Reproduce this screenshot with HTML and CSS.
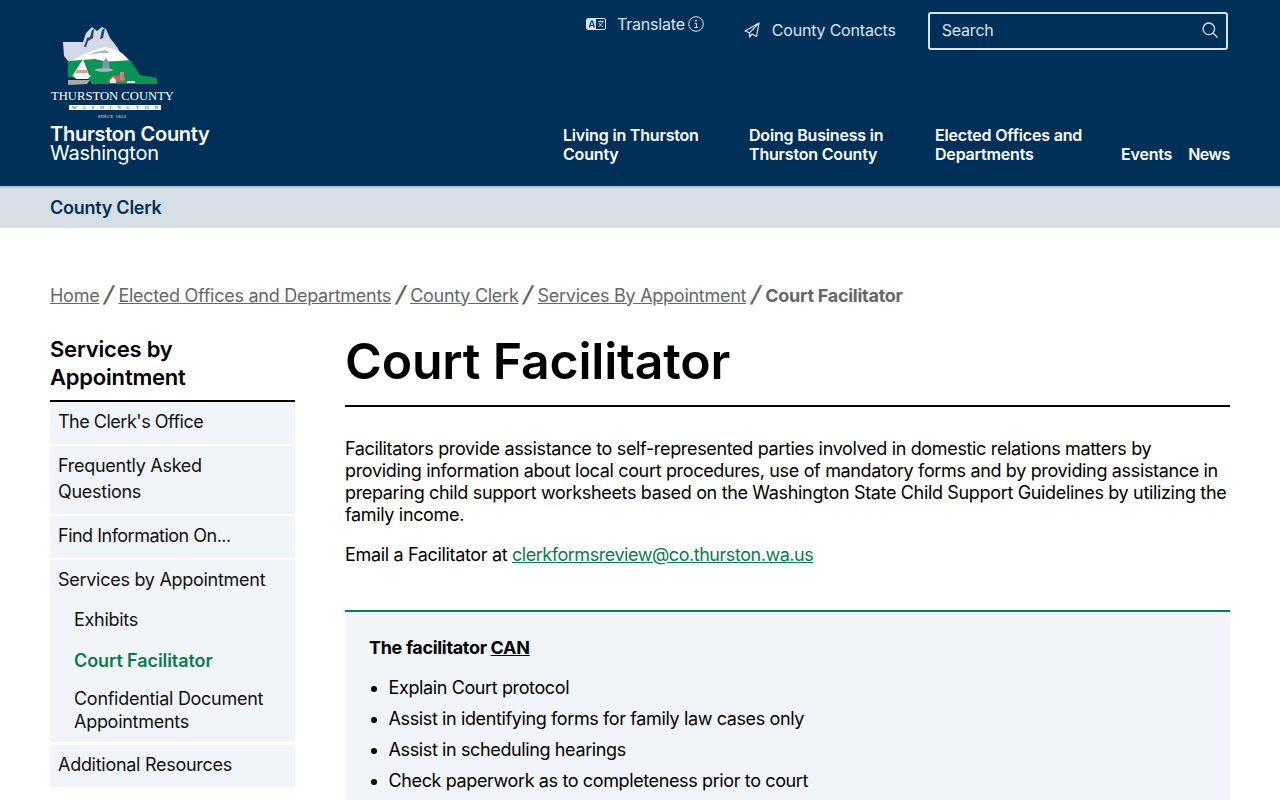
FILE: index.html
```html
<!DOCTYPE html>
<html lang="en">
<head>
<meta charset="utf-8">
<title>Court Facilitator</title>
<link rel="stylesheet" href="styles.css">
</head>
<body>
<header class="site-header">
  <div class="brand">
    <svg class="seal" viewBox="0 0 124 93" width="124" height="93" aria-hidden="true">
      <path d="M13 16L33 16 36 7 42 1 47 5 52 1 56 3 60 12 67 21 73 31 78 35H18L14 30z" fill="#d5d8ea"/>
      <path d="M30 30L42 25 55 21 63 23 72 27 80 35 18 37z" fill="#fff"/>
      <path d="M38 29L46 26 55 24 60 27 50 27z" fill="#aab3c6"/>
      <path d="M18 35L45 33 58 36 80 34 90 49 107 52 107 58 42 58 38 52 18 51z" fill="#0a9454"/>
      <path d="M18 54H40L37 58 18 59z" fill="#a6aaad"/>
      <path d="M33 33L39 49H23z" fill="#fff"/>
      <path d="M27 44H37L38 47H25z" fill="#dc9b8e"/>
      <path d="M22 49H41L38 53H26z" fill="#f4f4f4"/>
      <path d="M52 44L53 36 56 32 59 36 60 44z" fill="#7f93a8"/>
      <ellipse cx="54" cy="44" rx="9" ry="1.800" fill="#a9b6c6"/>
      <path d="M57 56L62 50 70 49 75 51 75 56z" fill="#b4675c"/>
      <path d="M70 46H74V54H70z" fill="#c7837a"/>
      <path d="M60 54L63 51 66 54V57H60z" fill="#f1e5e0"/>
      <path d="M77 55H85V57H77z" fill="#e6e6e6"/>
      <path d="M34 21L37 12 40 11 42 4 44 3 43 12 38 15 36 21z" fill="#24426c"/>
      <path d="M50 13L52 4 55 2 53 12z" fill="#24426c"/>
      <text class="seal-name" x="62.500" y="74" text-anchor="middle" textLength="123" lengthAdjust="spacingAndGlyphs">THURSTON COUNTY</text>
      <rect x="19" y="79" width="92" height="5" fill="#fff"/>
      <text class="seal-wa" x="65" y="83.300" text-anchor="middle" textLength="86">WASHINGTON</text>
      <text class="seal-since" x="62" y="92" text-anchor="middle" textLength="28">SINCE 1852</text>
    </svg>
    <div class="brand-name"><strong>Thurston County</strong><span>Washington</span></div>
  </div>
  <div class="header-right">
    <div class="utility">
      <div class="translate">
        <svg class="ico-lang" viewBox="0 0 20 12" width="20" height="12" aria-hidden="true">
          <rect x=".5" y=".5" width="19" height="11" rx="1.500" fill="none" stroke="#d6e4f0"/>
          <path d="M1 2a1 1 0 0 1 1-1h8v10H2a1 1 0 0 1-1-1z" fill="#d6e4f0"/>
          <path d="M3.400 9.500l2-6.500h1l2 6.500M4.200 7.500h3.400" fill="none" stroke="#003057" stroke-width="1.200"/>
          <path d="M12 3.500h5.500M14.700 2.500v1M16.500 3.500c-.5 2.300-2 4-4 5M13 5c.7 1.500 2.300 3 4 3.500" fill="none" stroke="#d6e4f0" stroke-width=".9"/>
        </svg>
        <span class="translate-label">Translate</span>
        <svg class="ico-info" viewBox="0 0 16 16" width="16" height="16" aria-hidden="true">
          <circle cx="8" cy="8" r="7.300" fill="none" stroke="#d6e4f0" stroke-width="1"/>
          <circle cx="8" cy="4.700" r=".9" fill="#d6e4f0"/>
          <path d="M6.500 7.200H8.400V11.500M6.300 11.500H10" fill="none" stroke="#d6e4f0" stroke-width="1"/>
        </svg>
      </div>
      <a class="contacts" href="#">
        <svg viewBox="0 0 16 16" width="16" height="16" aria-hidden="true">
          <path d="M15 1L1 9 5.500 10.800 15 1 12.500 14.500 8 12 5.500 15V10.800" fill="none" stroke="#d6e4f0" stroke-width="1.200" stroke-linejoin="round"/>
        </svg>
        <span>County Contacts</span>
      </a>
      <div class="search">
        <span>Search</span>
        <svg viewBox="0 0 16 16" width="16" height="16" aria-hidden="true">
          <circle cx="6.800" cy="6.800" r="5.800" fill="none" stroke="#d6e4f0" stroke-width="1.300"/>
          <path d="M11 11l4.500 4.500" stroke="#d6e4f0" stroke-width="1.300"/>
        </svg>
      </div>
    </div>
    <nav class="main-nav">
      <a class="nav-wide" href="#">Living in Thurston County</a>
      <a class="nav-wide" href="#">Doing Business in Thurston County</a>
      <a class="nav-wide" href="#">Elected Offices and Departments</a>
      <a class="nav-short" href="#">Events</a>
      <a class="nav-short" href="#">News</a>
    </nav>
  </div>
</header>
<div class="subbar"><a href="#">County Clerk</a></div>
<main class="page">
  <nav class="crumbs">
    <a href="#">Home</a><i>/</i><a href="#">Elected Offices and Departments</a><i>/</i><a href="#">County Clerk</a><i>/</i><a href="#">Services By Appointment</a><i>/</i><b>Court Facilitator</b>
  </nav>
  <div class="columns">
    <aside class="side">
      <h2>Services by Appointment</h2>
      <ul class="side-list">
        <li class="tight"><a href="#">The Clerk's Office</a></li>
        <li><a href="#">Frequently Asked Questions</a></li>
        <li class="tight"><a href="#">Find Information On...</a></li>
        <li class="has-sub"><a href="#">Services by Appointment</a>
          <ul class="sub-list">
            <li><a href="#">Exhibits</a></li>
            <li class="current"><a href="#">Court Facilitator</a></li>
            <li><a href="#">Confidential Document Appointments</a></li>
          </ul>
        </li>
        <li><a href="#">Additional Resources</a></li>
      </ul>
    </aside>
    <article class="content">
      <h1>Court Facilitator</h1>
      <p class="intro">Facilitators provide assistance to self-represented parties involved in domestic relations matters by providing information about local court procedures, use of mandatory forms and by providing assistance in preparing child support worksheets based on the Washington State Child Support Guidelines by utilizing the family income.</p>
      <p class="email">Email a Facilitator at <a href="#">clerkformsreview@co.thurston.wa.us</a></p>
      <section class="panel">
        <p class="panel-title"><b>The facilitator <u>CAN</u></b></p>
        <ul>
          <li>Explain Court protocol</li>
          <li>Assist in identifying forms for family law cases only</li>
          <li>Assist in scheduling hearings</li>
          <li>Check paperwork as to completeness prior to court</li>
        </ul>
      </section>
    </article>
  </div>
</main>
</body>
</html>
```
FILE: styles.css
```css
* { box-sizing: border-box; }
html, body { height: 800px; overflow: hidden; }
body { margin: 0; font-family: Inter, "Liberation Sans", sans-serif; color: #000; background: #fff; font-size: 18px; letter-spacing: -0.34px; }
a { color: inherit; }
.site-header { height: 188px; background: #003057; border-bottom: 2px solid #b9c4cd; padding: 0 50px; display: flex; justify-content: space-between; }
.brand { padding-top: 26px; width: 300px; }
.seal { display: block; }
.seal-name { font: 11.500px "Liberation Serif", serif; fill: #fff; letter-spacing: 0; }
.seal-wa { font: 5px "Liberation Serif", serif; fill: #003057; letter-spacing: 0; }
.seal-since { font: 4.500px "Liberation Serif", serif; fill: #fff; letter-spacing: 0; }
.brand-name { margin-top: 6px; color: #fff; font-size: 20px; line-height: 19px; letter-spacing: -0.27px; display: flex; flex-direction: column; }
.brand-name strong { font-weight: 600; }
.header-right { width: 667px; display: flex; flex-direction: column; justify-content: space-between; }
.utility { display: flex; align-items: flex-start; padding-top: 12px; color: #d6e4f0; font-size: 16px; letter-spacing: -0.2px; }
.translate { display: flex; align-items: center; gap: 11px; margin-left: 23px; height: 24px; }
.translate-label { margin-right: -8px; }
.contacts { display: flex; align-items: center; gap: 12px; margin-left: 40px; height: 36px; text-decoration: none; }
.search { margin-left: 32px; width: 300px; height: 38px; border: 2px solid #d6e4f0; border-radius: 3px; display: flex; align-items: center; justify-content: space-between; padding: 0 8px 2px 12px; }
.main-nav { display: flex; align-items: flex-end; padding-bottom: 22px; color: #fff; font-size: 16px; font-weight: 600; line-height: 19px; letter-spacing: -0.2px; }
.main-nav a { text-decoration: none; white-space: nowrap; flex: none; }
.main-nav a.nav-wide { width: 186px; white-space: normal; padding-right: 16px; letter-spacing: -0.18px; }
.main-nav a.nav-short { margin-right: 16px; }
.main-nav a.nav-short:last-child { margin-right: 0; letter-spacing: -0.5px; }
.subbar { height: 40px; background: #d6dfe6; padding: 0 50px 2px; display: flex; align-items: center; color: #003057; font-weight: 600; letter-spacing: -0.25px; }
.subbar a { text-decoration: none; }
.page { padding: 56px 50px 0; }
.crumbs { color: #666; display: flex; align-items: center; height: 22px; gap: 4px; letter-spacing: -0.27px; }
.crumbs i { font-style: normal; font-size: 22px; line-height: 22px; font-weight: 600; margin: -2px 1.500px 0; display: inline-block; transform: skewX(-14deg); }
.columns { display: flex; gap: 50px; margin-top: 27px; }
.side { width: 245px; flex: none; }
.side h2 { margin: 0; padding: 2px 0 9px; font-size: 22px; line-height: 28px; font-weight: 600; border-bottom: 2px solid #000; letter-spacing: -0.2px; }
.side-list, .sub-list { list-style: none; margin: 0; padding: 0; letter-spacing: -0.28px; }
.side-list > li { background: #f1f4f8; margin-bottom: 2px; }
.side-list > li.tight { letter-spacing: -0.5px; }
.side-list > li > a { display: block; padding: 7px 8px 9px; line-height: 26px; text-decoration: none; color: #111; }
.side-list > li.has-sub { padding-bottom: 9px; margin-bottom: 3px; }
.sub-list a { display: block; padding: 0 8px 0 24px; line-height: 23px; text-decoration: none; color: #111; }
.sub-list li:first-child { margin-top: 6px; margin-bottom: 18px; }
.sub-list li.current { margin-bottom: 15px; }
.sub-list .current a { color: #0b7a4f; font-weight: 600; letter-spacing: -0.08px; }
.content { flex: 1; min-width: 0; }
.content h1 { margin: 0; font-size: 50px; line-height: 56px; font-weight: 600; padding: 0 0 16px; border-bottom: 2px solid #000; letter-spacing: -0.2px; }
.intro { margin: 31px 0 0; line-height: 22px; }
.email { margin: 18px 0 0; line-height: 22px; }
.email a { color: #0b7a4f; letter-spacing: -0.46px; }
.panel { margin-top: 44px; background: #f1f4f8; border-top: 2px solid #0b7a4f; padding: 25px 24px 40px; }
.panel-title { margin: 0; line-height: 22px; letter-spacing: -0.33px; }
.panel ul { margin: 18px 0 0; padding: 0 0 0 19.500px; letter-spacing: -0.38px; }
.panel li { line-height: 22px; margin-bottom: 9px; }
```
